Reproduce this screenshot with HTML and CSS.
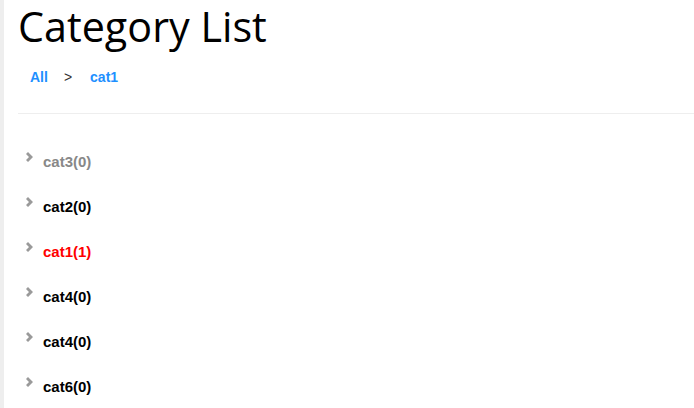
FILE: index.html
```html
<!DOCTYPE html>
<html>
<head>
<meta charset="utf-8">
<link rel="stylesheet" href="styles.css">
</head>
<body>
<div class="page">
  <div class="side"></div>
  <main class="main">
    <h1 class="title">Category List</h1>
    <nav class="crumbs">
      <a class="crumb">All</a>
      <span class="sep">&gt;</span>
      <a class="crumb">cat1</a>
    </nav>
    <hr class="divider">
    <ul class="cats">
      <li class="cat muted"><svg class="chev" viewBox="0 0 7 10"><path d="M0 2 L2 0 L7 5 L2 10 L0 8 L3 5 Z"/></svg><span class="label">cat3(0)</span></li>
      <li class="cat"><svg class="chev" viewBox="0 0 7 10"><path d="M0 2 L2 0 L7 5 L2 10 L0 8 L3 5 Z"/></svg><span class="label">cat2(0)</span></li>
      <li class="cat active"><svg class="chev" viewBox="0 0 7 10"><path d="M0 2 L2 0 L7 5 L2 10 L0 8 L3 5 Z"/></svg><span class="label">cat1(1)</span></li>
      <li class="cat"><svg class="chev" viewBox="0 0 7 10"><path d="M0 2 L2 0 L7 5 L2 10 L0 8 L3 5 Z"/></svg><span class="label">cat4(0)</span></li>
      <li class="cat"><svg class="chev" viewBox="0 0 7 10"><path d="M0 2 L2 0 L7 5 L2 10 L0 8 L3 5 Z"/></svg><span class="label">cat4(0)</span></li>
      <li class="cat"><svg class="chev" viewBox="0 0 7 10"><path d="M0 2 L2 0 L7 5 L2 10 L0 8 L3 5 Z"/></svg><span class="label">cat6(0)</span></li>
    </ul>
  </main>
</div>
</body>
</html>
```
FILE: styles.css
```css
html, body {
  margin: 0;
  padding: 0;
  background: #fff;
  overflow: hidden;
}
.page {
  display: flex;
  min-height: 408px;
}
.side {
  width: 4px;
  flex: none;
  background: #eeeeee;
}
.main {
  flex: 1;
  min-width: 0;
  padding-left: 14px;
}
.title {
  margin: 0;
  padding-top: 0;
  font-family: "Open Sans", sans-serif;
  font-weight: 400;
  font-size: 41.3px;
  line-height: 52px;
  color: #000;
  white-space: nowrap;
}
.crumbs {
  display: flex;
  align-items: center;
  padding: 16px 0 0 12px;
  height: 18px;
  font-family: "Liberation Sans", Arial, sans-serif;
  font-size: 14px;
}
.crumb {
  color: #1e90ff;
  font-weight: 700;
}
.sep {
  color: #333;
  margin: 0 18px 0 16px;
}
.divider {
  margin: 27px 0 0 0;
  border: 0;
  border-top: 1px solid #eeeeee;
  height: 0;
}
.cats {
  list-style: none;
  margin: 0;
  padding: 38px 0 0 8px;
}
.cat {
  display: flex;
  align-items: flex-start;
  height: 45px;
  font-family: "Liberation Sans", Arial, sans-serif;
  font-size: 15px;
  font-weight: 700;
  color: #000;
  line-height: 18px;
}
.cat.muted { color: #888888; }
.cat.active { color: #ff0000; }
.label {
  padding-top: 1px;
}
.chev {
  width: 7px;
  height: 10px;
  flex: none;
  margin-top: 0;
  margin-right: 10px;
  fill: #9a9a9a;
}
```
